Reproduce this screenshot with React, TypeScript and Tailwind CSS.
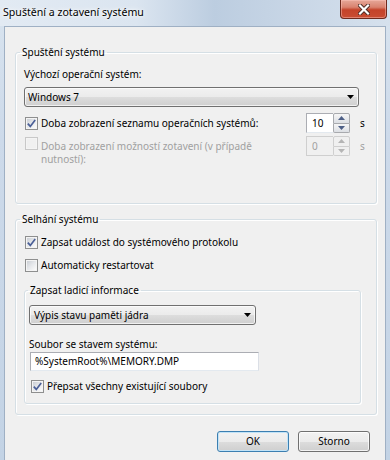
import React from "react";

function CheckBox({ checked = false, disabled = false }: { checked?: boolean; disabled?: boolean }) {
  return (
    <span
      className={`flex h-[13px] w-[13px] shrink-0 items-center justify-center border p-[1px] ${
        disabled ? "border-[#c8c8c8] bg-[#f4f4f4]" : "border-[#8e8f8f] bg-[#f4f4f4]"
      }`}
    >
      <span
        className={`relative flex h-full w-full items-center justify-center ${
          disabled
            ? "bg-[#f0f0f0]"
            : "bg-[linear-gradient(135deg,#cbcfd5_0%,#e6e8eb_50%,#fbfbfb_100%)]"
        }`}
      >
        {checked && (
          <svg width="9" height="9" viewBox="0 0 9 9" className="overflow-visible">
            <path d="M0.8 4.6 L3.3 7.4 L8.2 0.9" fill="none" stroke="#4a5f97" strokeWidth="1.7" />
          </svg>
        )}
      </span>
    </span>
  );
}

function DropDown({ value, width }: { value: string; width: string }) {
  return (
    <div
      className={`${width} flex h-[20px] items-center justify-between rounded-[3px] border border-[#707070] bg-[linear-gradient(to_bottom,#f2f2f2_0%,#ebebeb_50%,#dddddd_51%,#cfcfcf_100%)] pr-[4px] shadow-[inset_0_0_0_1px_rgba(255,255,255,0.7)]`}
    >
      <span className="leading-[15px]">{value}</span>
      <svg width="7" height="4" viewBox="0 0 7 4">
        <path d="M0 0 H7 L3.5 4 Z" fill="#000" />
      </svg>
    </div>
  );
}

function Spin({ value, disabled = false }: { value: string; disabled?: boolean }) {
  const arrow = disabled ? "#b5b5b5" : "#4d5f86";
  const btn = disabled
    ? "border-[#cfcfcf] bg-[#f0f0f0]"
    : "border-[#a8aaae] bg-[linear-gradient(to_bottom,#f6f6f6,#dcdfe4)]";
  return (
    <div className="flex h-[20px] w-[44px] shrink-0">
      <div
        className={`flex flex-1 items-center border border-r-0 pl-[5px] leading-[15px] ${
          disabled
            ? "border-[#cfcfcf] bg-[#f0f0f0] text-[#a0a0a0]"
            : "border-[#abadb3] border-b-[#e3e9ef] bg-white"
        }`}
      >
        {value}
      </div>
      <div className="flex w-[17px] flex-col">
        <div className={`flex flex-1 items-center justify-center rounded-t-[2px] border ${btn}`}>
          <svg width="7" height="4" viewBox="0 0 7 4">
            <path d="M0 4 H7 L3.5 0 Z" fill={arrow} />
          </svg>
        </div>
        <div className={`flex flex-1 items-center justify-center rounded-b-[2px] border border-t-0 ${btn}`}>
          <svg width="7" height="4" viewBox="0 0 7 4">
            <path d="M0 0 H7 L3.5 4 Z" fill={arrow} />
          </svg>
        </div>
      </div>
    </div>
  );
}

function Button({ label, primary = false }: { label: string; primary?: boolean }) {
  return (
    <button
      className={`h-[21px] w-[72px] rounded-[3px] border leading-[15px] text-black bg-[linear-gradient(to_bottom,#f2f2f2_0%,#ebebeb_50%,#dddddd_51%,#cfcfcf_100%)] ${
        primary
          ? "border-[#3c7fb1] shadow-[inset_0_0_0_1px_#c2e3f7]"
          : "border-[#707070] shadow-[inset_0_0_0_1px_rgba(255,255,255,0.75)]"
      }`}
    >
      {label}
    </button>
  );
}

export default function App() {
  return (
    <div className="h-[460px] w-[390px] overflow-hidden bg-[linear-gradient(to_bottom,#d9e4ef_0%,#cddaea_30%,#c3d3e5_100%)] font-['Segoe_UI','Noto_Sans',sans-serif] text-[10px] text-black">
      {/* Title bar */}
      <div className="flex h-[26px] items-start bg-[linear-gradient(to_right,#e2eaf3_0%,#dbe5f0_35%,#bccde0_55%,#c8d6e6_75%,#d6e1ed_100%)]">
        <span className="pl-[3px] pt-[5px] text-[10.6px] leading-[15px] [text-shadow:0_0_6px_#fff,0_0_3px_#fff]">
          Spuštění a zotavení systému
        </span>
        <div className="ml-auto mr-[3px] flex h-[19px] w-[47px] items-center justify-center rounded-b-[4px] border border-t-0 border-[#6e2a1e] bg-[linear-gradient(to_bottom,#e6a899_0%,#d9826f_40%,#c4432a_55%,#c94d33_100%)] shadow-[inset_0_0_0_1px_rgba(255,200,190,0.45)]">
          <svg width="12" height="11" viewBox="0 0 12 11">
            <path d="M2 1.5 L10 9.5 M10 1.5 L2 9.5" stroke="#4a2a24" strokeWidth="4" strokeLinecap="square" />
            <path d="M2 1.5 L10 9.5 M10 1.5 L2 9.5" stroke="#fff" strokeWidth="2.2" strokeLinecap="square" />
          </svg>
        </div>
      </div>

      {/* Client area */}
      <div className="ml-[4px] w-[382px] border border-[#9fb0c4] bg-[#f0f0f0] pb-[11px] pl-[10px] pr-[8px] pt-[18px]">
        {/* Spuštění systému */}
        <fieldset className="rounded-[3px] border border-[#d5dfe5] px-[8px] shadow-[inset_1px_1px_0_#fff,1px_1px_0_#fff]">
          <legend className="ml-[-4px] px-[2px] leading-[15px]">Spuštění systému</legend>
          <div className="h-[136px]">
            <div className="mt-[7px] leading-[15px]">Výchozí operační systém:</div>
            <DropDown value="Windows 7" width="w-[335px] mt-[5px] pl-[3px]" />
            <div className="mt-[6px] flex items-center">
              <label className="flex flex-1 items-center gap-[3px] pl-[1px] leading-[15px]">
                <CheckBox checked />
                <span>Doba zobrazení seznamu operačních systémů:</span>
              </label>
              <Spin value="10" />
              <span className="ml-[10px] w-[8px] leading-[15px]">s</span>
            </div>
            <div className="mt-[3px] flex items-start">
              <label className="flex flex-1 items-start gap-[3px] pl-[1px] text-[#a0a0a0]">
                <span className="mt-[1px]">
                  <CheckBox disabled />
                </span>
                <span className="mt-[4px] leading-[13px]">
                  Doba zobrazení možností zotavení (v případě
                  <br />
                  nutností):
                </span>
              </label>
              <Spin value="0" disabled />
              <span className="ml-[10px] mt-[3px] w-[8px] leading-[15px] text-[#a0a0a0]">s</span>
            </div>
          </div>
        </fieldset>

        {/* Selhání systému */}
        <fieldset className="mt-[8px] rounded-[3px] border border-[#d5dfe5] px-[8px] pb-[10px] shadow-[inset_1px_1px_0_#fff,1px_1px_0_#fff]">
          <legend className="ml-[-4px] px-[2px] leading-[15px]">Selhání systému</legend>
          <label className="mt-[8px] flex items-center gap-[3px] pl-[1px] leading-[15px]">
            <CheckBox checked />
            <span>Zapsat událost do systémového protokolu</span>
          </label>
          <label className="mt-[8px] flex items-center gap-[3px] pl-[1px] leading-[15px]">
            <CheckBox />
            <span>Automaticky restartovat</span>
          </label>

          <fieldset className="mt-[10px] w-[337px] rounded-[3px] border border-[#d5dfe5] pb-[9px] pl-[4px] shadow-[inset_1px_1px_0_#fff,1px_1px_0_#fff]">
            <legend className="ml-[-1px] px-[2px] leading-[15px]">Zapsat ladicí informace</legend>
            <DropDown value="Výpis stavu paměti jádra" width="w-[227px] mt-[7px] pl-[4px]" />
            <div className="mt-[12px] leading-[15px]">Soubor se stavem systému:</div>
            <div className="ml-[1px] flex h-[19px] w-[229px] items-center border border-[#abadb3] border-b-[#e3e9ef] border-r-[#dbdfe6] bg-white pl-[4px] leading-[15px]">
              %SystemRoot%\MEMORY.DMP
            </div>
            <label className="mt-[8px] flex items-center gap-[3px] pl-[2px] leading-[15px]">
              <CheckBox checked />
              <span>Přepsat všechny existující soubory</span>
            </label>
          </fieldset>
        </fieldset>

        {/* Buttons */}
        <div className="mt-[16px] flex justify-end gap-[9px] pr-[7px]">
          <Button label="OK" primary />
          <Button label="Storno" />
        </div>
      </div>
    </div>
  );
}
